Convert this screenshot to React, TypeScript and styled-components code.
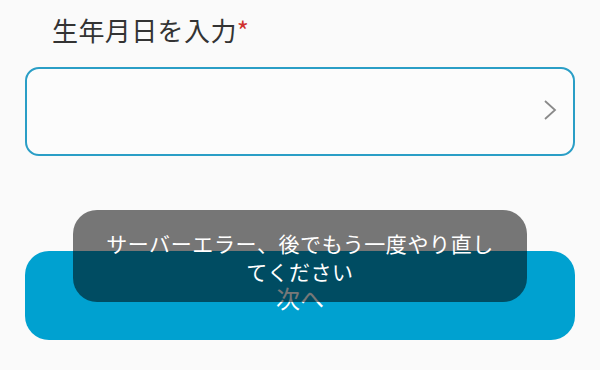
import React from 'react';
import styled, { createGlobalStyle } from 'styled-components';

const GlobalStyle = createGlobalStyle`
  html, body {
    margin: 0;
    padding: 0;
    background: #fafafa;
    font-family: 'Noto Sans CJK JP', 'Noto Sans', sans-serif;
  }
`;

const Page = styled.div`
  position: relative;
  width: 600px;
  height: 370px;
  box-sizing: border-box;
  padding: 10px 25px 0;
  display: flex;
  flex-direction: column;
`;

const Label = styled.div`
  padding-left: 27px;
  font-size: 26px;
  line-height: 40px;
  color: #333333;
  letter-spacing: 0.4px;
`;

const Required = styled.span`
  color: #d0312d;
`;

const Field = styled.div`
  margin-top: 17px;
  height: 89px;
  box-sizing: border-box;
  border: 2px solid #2a9ec6;
  border-radius: 14px;
  background: #fcfcfc;
  display: flex;
  align-items: center;
  justify-content: flex-end;
  padding: 0 16px 4px 0;
`;

const Button = styled.button`
  margin-top: 95px;
  height: 89px;
  border: none;
  border-radius: 24px;
  background: #00a1d0;
  color: #ffffff;
  font-family: inherit;
  font-size: 24px;
  display: flex;
  align-items: center;
  justify-content: center;
  padding-top: 4px;
`;

const Toast = styled.div`
  position: absolute;
  left: 73px;
  top: 210px;
  width: 454px;
  height: 92px;
  box-sizing: border-box;
  border-radius: 24px;
  background: rgba(0, 0, 0, 0.53);
  color: #ffffff;
  font-size: 21px;
  letter-spacing: 0.6px;
  line-height: 28px;
  text-align: center;
  padding: 19px 28px 0;
`;

const App: React.FC = () => {
  return (
    <>
      <GlobalStyle />
      <Page>
        <Label>
          生年月日を入力<Required>*</Required>
        </Label>
        <Field>
          <svg width="14" height="22" viewBox="0 0 14 22" fill="none">
            <path d="M2 2 L12 11 L2 20" stroke="#8a8a8a" strokeWidth="1.8" />
          </svg>
        </Field>
        <Button>次へ</Button>
        <Toast>サーバーエラー、後でもう一度やり直してください</Toast>
      </Page>
    </>
  );
};

export default App;
